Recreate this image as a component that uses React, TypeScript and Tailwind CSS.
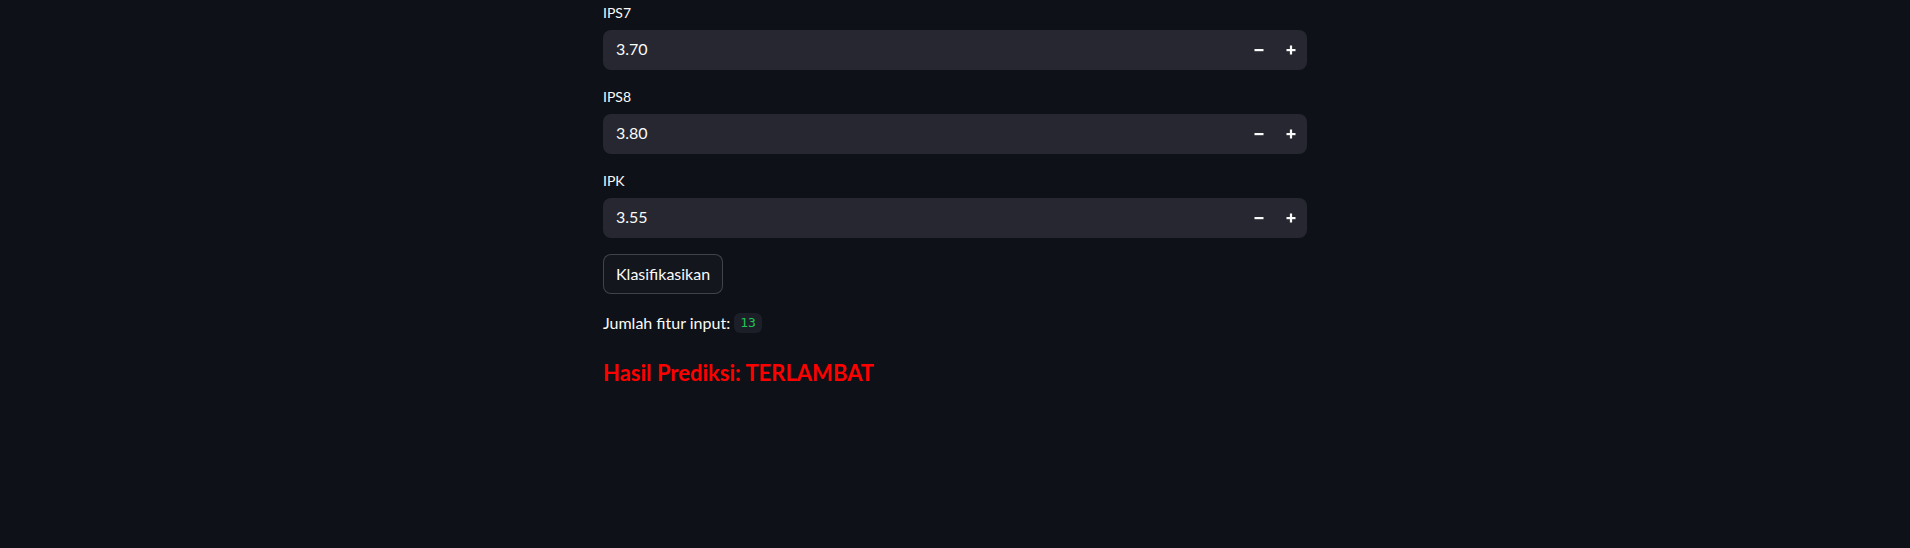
import React from "react";

const font = { fontFamily: "Lato, 'Noto Sans', sans-serif" };

function Minus() {
  return (
    <svg width="10" height="10" viewBox="0 0 10 10">
      <rect x="0.5" y="4" width="9" height="2.2" fill="#fafafa" />
    </svg>
  );
}
function Plus() {
  return (
    <svg width="10" height="10" viewBox="0 0 10 10">
      <rect x="0.5" y="4" width="9" height="2.2" fill="#fafafa" />
      <rect x="3.9" y="0.5" width="2.2" height="9" fill="#fafafa" />
    </svg>
  );
}

function NumberInput({ label, value }: { label: string; value: string }) {
  return (
    <div className="flex flex-col">
      <div className="h-6 mb-1 flex items-center pb-[3px] text-[14px] text-[#fafafa]">{label}</div>
      <div className="h-10 rounded-lg bg-[#262730] flex items-center">
        <div className="flex-1 pl-[13px] pb-[2px] text-[16px] text-[#fafafa]">{value}</div>
        <div className="flex h-full">
          <div className="w-8 h-full flex items-center justify-center"><Minus /></div>
          <div className="w-8 h-full flex items-center justify-center"><Plus /></div>
        </div>
      </div>
    </div>
  );
}

export default function App() {
  return (
    <div className="min-h-[548px] w-full bg-[#0e1117] text-[#fafafa]" style={font}>
      <div className="w-[704px] mx-auto pt-[2px] flex flex-col gap-4">
        <NumberInput label="IPS7" value="3.70" />
        <NumberInput label="IPS8" value="3.80" />
        <NumberInput label="IPK" value="3.55" />
        <div>
          <button className="h-10 px-3 pb-[1px] rounded-lg border border-[rgba(250,250,250,0.2)] bg-[#13161d] text-[16px] text-[#fafafa]">
            Klasifikasikan
          </button>
        </div>
        <div className="text-[16px] leading-[25.6px] flex items-center">
          <span>Jumlah fitur input:</span>
          <span className="ml-[4px] px-[6px] h-5 flex items-center rounded-md bg-[#1c1f27] text-[#21c354] text-[13px]" style={{ fontFamily: "'DejaVu Sans Mono', monospace" }}>13</span>
        </div>
        <h3 className="mt-[6px] text-[22px] font-bold leading-[29px] text-[#ff0000]">Hasil Prediksi: TERLAMBAT</h3>
      </div>
    </div>
  );
}
